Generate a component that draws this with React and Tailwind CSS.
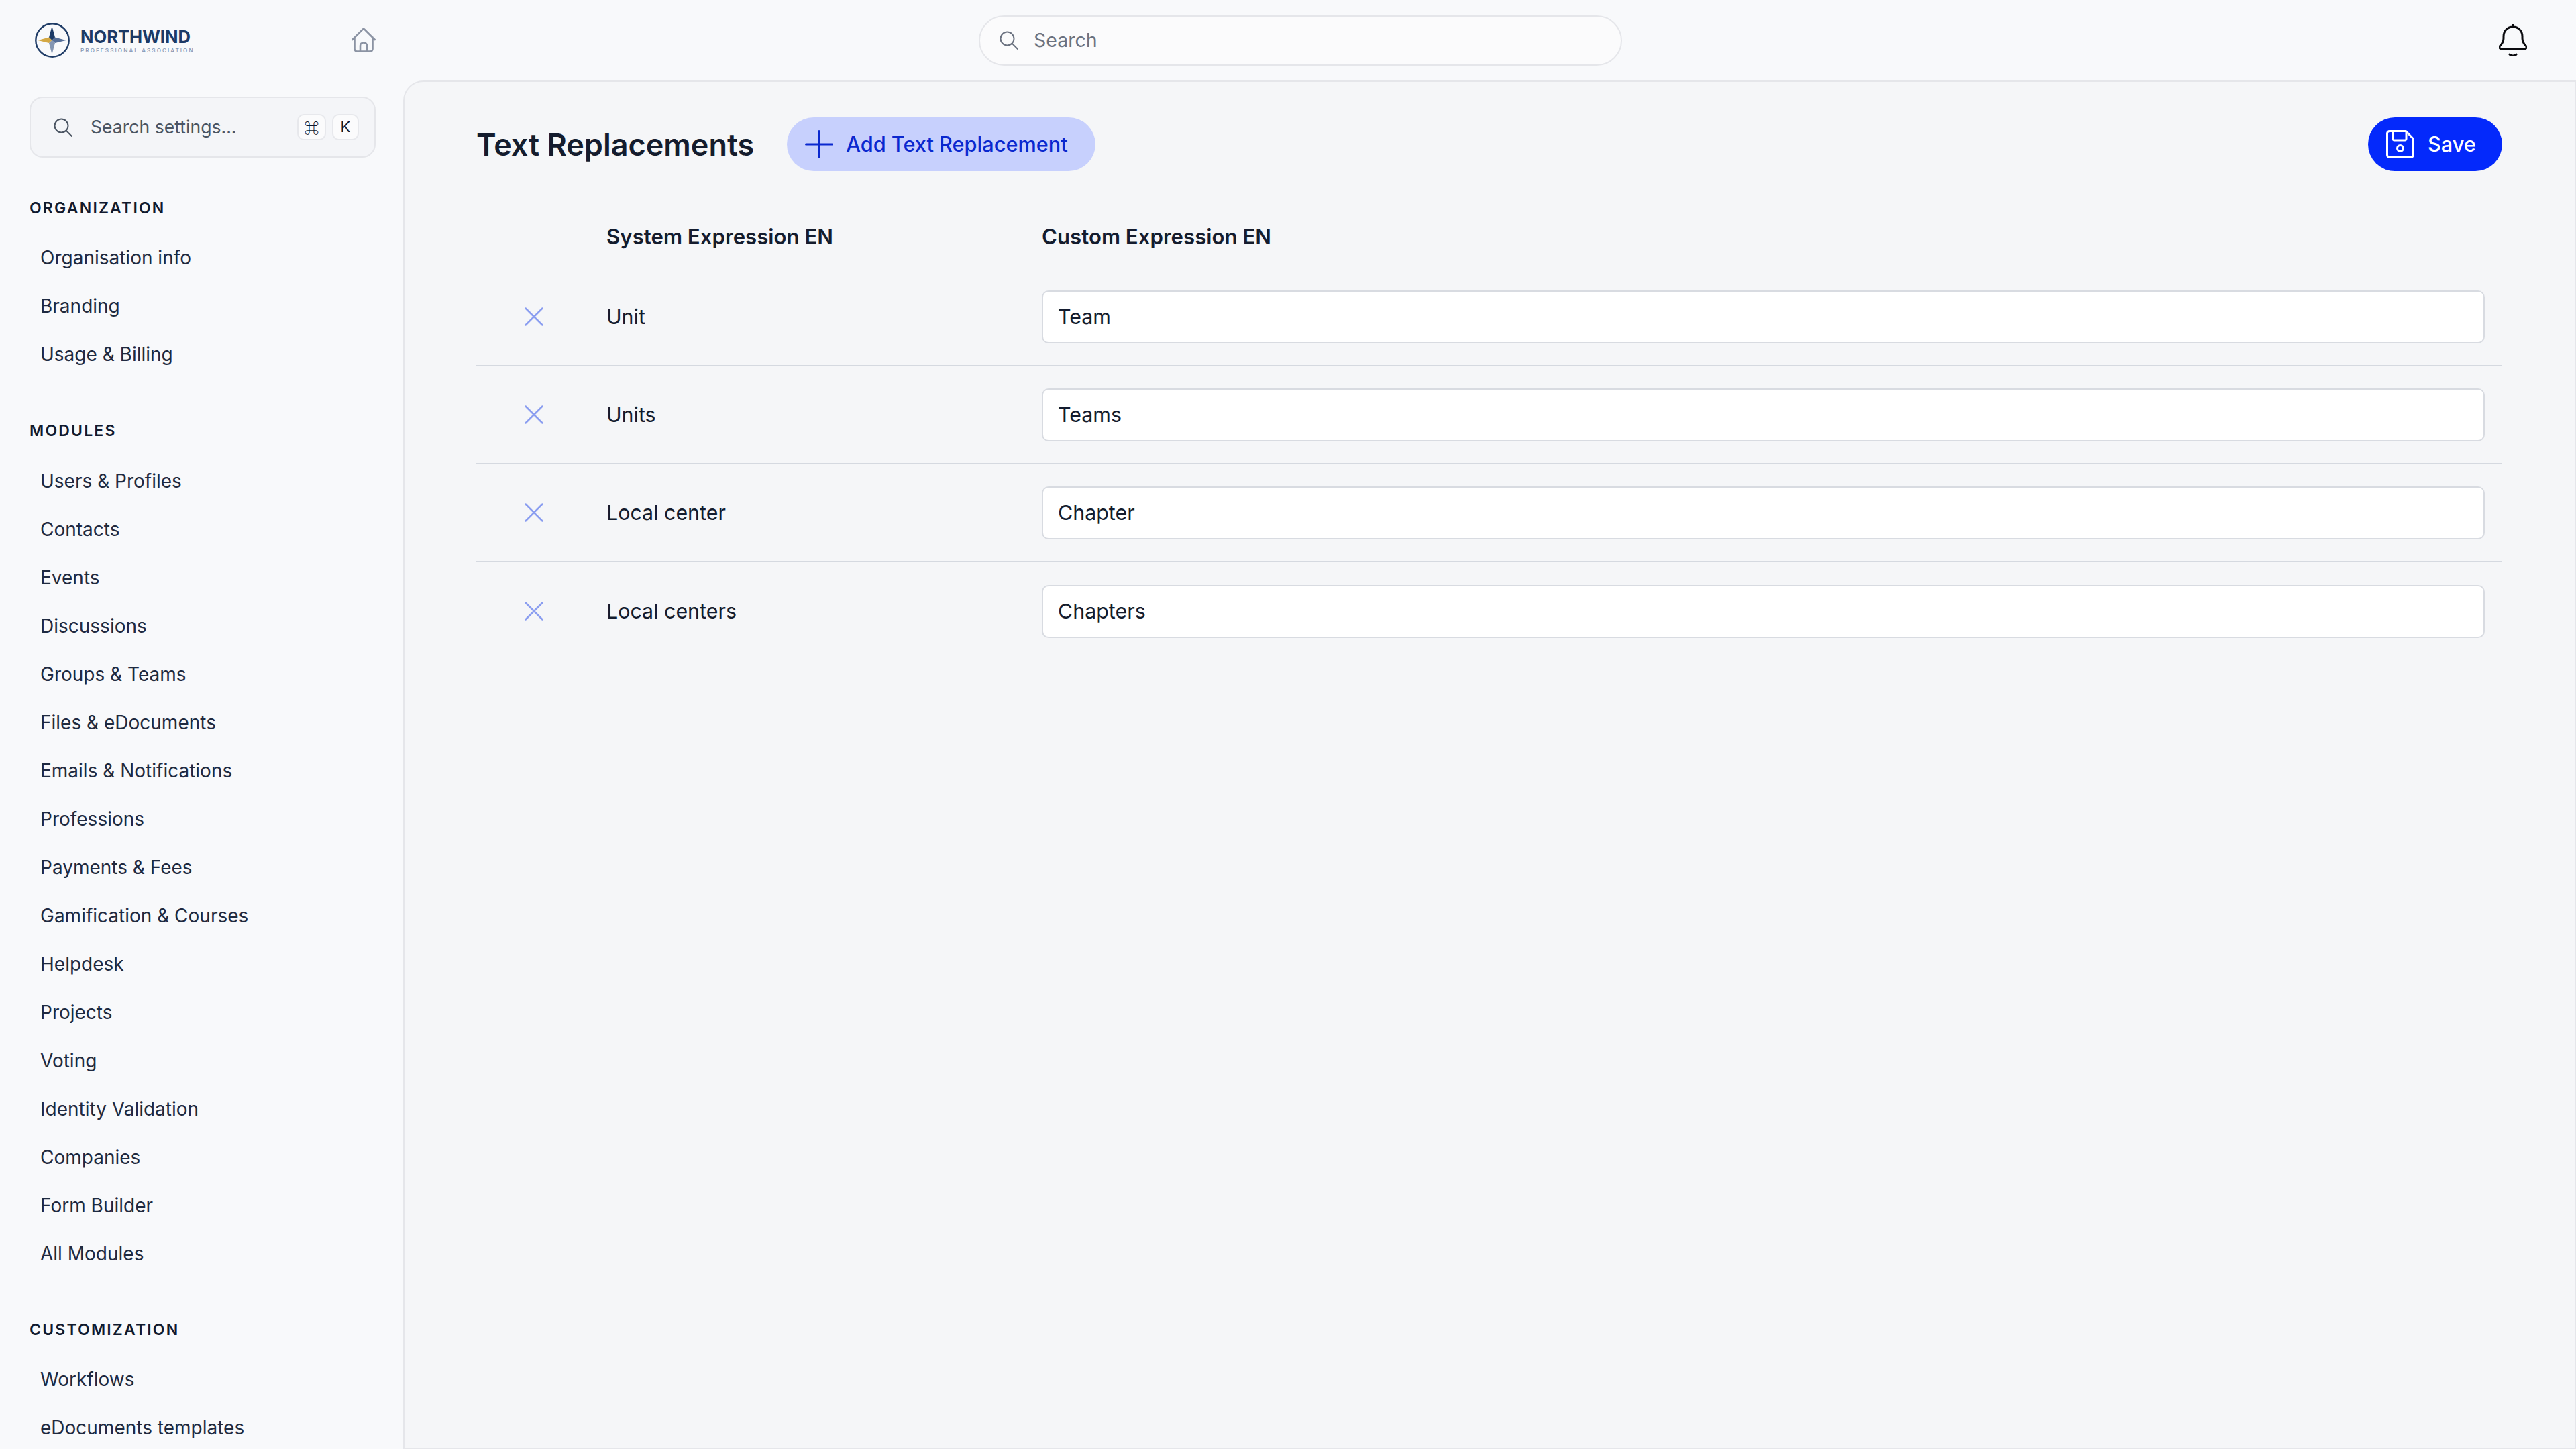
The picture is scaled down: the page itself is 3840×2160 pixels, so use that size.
import React from "react";

const groups = [
  { title: "ORGANIZATION", cls: "mt-[59px] mb-[22px]", items: ["Organisation info", "Branding", "Usage & Billing"] },
  { title: "MODULES", cls: "mt-[62px] mb-[23px]", items: ["Users & Profiles", "Contacts", "Events", "Discussions", "Groups & Teams", "Files & eDocuments", "Emails & Notifications", "Professions", "Payments & Fees", "Gamification & Courses", "Helpdesk", "Projects", "Voting", "Identity Validation", "Companies", "Form Builder", "All Modules"] },
  { title: "CUSTOMIZATION", cls: "mt-[61px] mb-[22px]", items: ["Workflows", "eDocuments templates"] },
];

const rows = [
  ["Unit", "Team"],
  ["Units", "Teams"],
  ["Local center", "Chapter"],
  ["Local centers", "Chapters"],
];

function SearchIcon({ className }) {
  return (
    <svg viewBox="0 0 28 28" fill="none" stroke="currentColor" strokeWidth="2" strokeLinecap="round" className={className}>
      <circle cx="11.5" cy="11.5" r="10" />
      <path d="M19 19l8 8" />
    </svg>
  );
}

function Logo() {
  return (
    <svg viewBox="0 0 52 52" className="w-[52px] h-[52px] shrink-0">
      <circle cx="26" cy="26" r="24.7" fill="none" stroke="#1f3c66" strokeWidth="2.4" />
      <polygon points="25.5,5 30,21.5 25.5,26 21,21.5" fill="#1c3a66" />
      <polygon points="4.5,26 21,21.5 25.5,26 21,30" fill="#d4a843" />
      <polygon points="46.5,26 30,21.5 25.5,26 30,30" fill="#556f99" />
      <polygon points="25.5,47 21,30 25.5,26 30,30" fill="#8496b3" />
    </svg>
  );
}

export default function App() {
  return (
    <div className="w-[3840px] h-[2160px] overflow-hidden flex flex-col bg-[#f8f9fb] text-[#111a2e] font-['Inter',sans-serif]">
      <header className="h-[120px] shrink-0 flex items-center">
        <div className="w-[601px] shrink-0 flex items-center justify-between pl-[52px] pr-[41px]">
          <div className="flex items-center gap-[16px]">
            <Logo />
            <div className="flex flex-col">
              <span className="text-[25.6px] leading-[28px] font-bold text-[#1c3a66]">NORTHWIND</span>
              <span className="text-[8.2px] leading-[10px] mt-[1px] font-medium tracking-[0.25em] text-[#8496b3] whitespace-nowrap">PROFESSIONAL ASSOCIATION</span>
            </div>
          </div>
          <svg viewBox="0 0 36 36" fill="none" stroke="#8b93a3" strokeWidth="2.6" strokeLinecap="round" strokeLinejoin="round" className="w-[36px] h-[36px]">
            <path d="M1.300 17 16.500 1.800c.8-.8 2.200-.8 3 0L34.700 17M4.500 13.500V31c0 2 1.500 3.500 3.500 3.500h20c2 0 3.500-1.500 3.500-3.500V13.500M13 34.500V26c0-2.500 2-4.500 5-4.500s5 2 5 4.500v8.500" />
          </svg>
        </div>
        <div className="ml-[858px] w-[959px] h-[75px] rounded-full border-2 border-[#e5e6ea] bg-[#fbfbfc] flex items-center pl-[29px]">
          <SearchIcon className="w-[28px] h-[28px] text-[#6b7280]" />
          <span className="ml-[23px] text-[28.5px] text-[#6b7280]">Search</span>
        </div>
        <svg viewBox="0 0 42 48" fill="none" stroke="#0b0b0f" strokeWidth="3" strokeLinecap="round" strokeLinejoin="round" className="w-[42px] h-[48px] ml-auto mr-[73px]">
          <path d="M21 4C13 4 7 10 7 18v3c0 5-2 8-5 11-2 2-1 5 2 5h34c3 0 4-3 2-5-3-3-5-6-5-11v-3c0-8-6-14-14-14ZM21 1v3M16 45c2 2.500 8 2.500 10 0" />
        </svg>
      </header>

      <div className="flex flex-1 min-h-0">
        <aside className="w-[601px] shrink-0 pl-[44px] pr-[41px] pt-[24px]">
          <div className="h-[91px] rounded-[20px] border-2 border-[#e5e6ea] bg-[#f4f5f8] flex items-center pl-[34px] pr-[23px]">
            <SearchIcon className="w-[28px] h-[28px] text-[#4b5563]" />
            <span className="ml-[27px] text-[26.6px] text-[#4b5563]">Search settings...</span>
            <kbd className="ml-auto w-[43px] h-[39px] rounded-[10px] border-2 border-[#e7e8ec] bg-[#fbfbfc] flex items-center justify-center text-[22px] font-normal text-[#111a2e] font-['Noto_Sans_CJK_JP','Noto_Sans',sans-serif]">⌘</kbd>
            <kbd className="ml-[9px] w-[40px] h-[39px] rounded-[10px] border-2 border-[#e7e8ec] bg-[#fbfbfc] flex items-center justify-center text-[22px] font-normal text-[#111a2e] font-['Inter',sans-serif]">K</kbd>
          </div>
          {groups.map((g) => (
            <section key={g.title}>
              <h2 className={`h-[32px] flex items-center text-[23px] font-semibold tracking-[0.095em] text-[#111a2e] ${g.cls}`}>{g.title}</h2>
              <ul>
                {g.items.map((it) => (
                  <li key={it} className="h-[72px] flex items-center pl-[16px] text-[28px] text-[#1f2a40]">{it}</li>
                ))}
              </ul>
            </section>
          ))}
        </aside>

        <main className="flex-1 min-w-0 bg-[#f5f6f8] border-2 border-[#e5e6ea] rounded-tl-[30px] pl-[107px] pr-[108px]">
          <div className="flex items-center pt-[52px]">
            <h1 className="text-[45px] leading-[80px] mt-[2px] font-semibold text-[#141c2e]">Text Replacements</h1>
            <button className="ml-[49px] h-[80px] w-[460px] rounded-full bg-[#c7d0fd] flex items-center pl-[27px] text-[#0a28cf]">
              <svg viewBox="0 0 42 42" fill="none" stroke="currentColor" strokeWidth="3" strokeLinecap="round" className="w-[42px] h-[42px]">
                <path d="M21 1.500v39M1.500 21h39" />
              </svg>
              <span className="ml-[19px] text-[30.7px] font-medium">Add Text Replacement</span>
            </button>
            <button className="ml-auto h-[80px] w-[200px] rounded-full bg-[#0429fb] flex items-center pl-[27px] text-white">
              <svg viewBox="0 0 42 42" fill="none" stroke="currentColor" strokeWidth="3" strokeLinejoin="round" className="w-[42px] h-[42px]">
                <path d="M5 1.500h24.500L40.500 13v24c0 2-1.500 3.500-3.500 3.500H5c-2 0-3.500-1.500-3.500-3.500V5C1.500 3 3 1.500 5 1.500Z" />
                <path d="M10 1.500V13c0 1 1 2 2 2h16c1 0 2-1 2-2V1.500" />
                <circle cx="21" cy="27" r="4.500" />
              </svg>
              <span className="ml-[20px] text-[30.7px] font-medium">Save</span>
            </button>
          </div>

          <div className="flex h-[141px] items-end pb-[20px] text-[31.2px] font-semibold text-[#141c2e]">
            <div className="w-[194px] shrink-0" />
            <div className="w-[649px] shrink-0">System Expression EN</div>
            <div>Custom Expression EN</div>
          </div>

          <div className="pt-[3px]">
            {rows.map(([a, b], i) => (
              <div key={a} className={`flex items-center h-[146px] ${i < rows.length - 1 ? "border-b-2 border-[#d5d9e0]" : ""}`}>
                <div className="w-[194px] shrink-0 pl-[72px]">
                  <svg viewBox="0 0 28 28" fill="none" stroke="#8b9ef0" strokeWidth="2.500" strokeLinecap="round" className="w-[28px] h-[28px]">
                    <path d="M1.500 1.500l25 25M26.500 1.500l-25 25" />
                  </svg>
                </div>
                <div className="w-[649px] shrink-0 pt-[2px] text-[30.4px] text-[#141c2e]">{a}</div>
                <div className="flex-1 h-[79px] mr-[26px] rounded-[10px] border-2 border-[#d8dbe1] bg-white flex items-center pl-[22px] pt-[2px] text-[30.4px] text-[#141c2e]">{b}</div>
              </div>
            ))}
          </div>
        </main>
      </div>
    </div>
  );
}
